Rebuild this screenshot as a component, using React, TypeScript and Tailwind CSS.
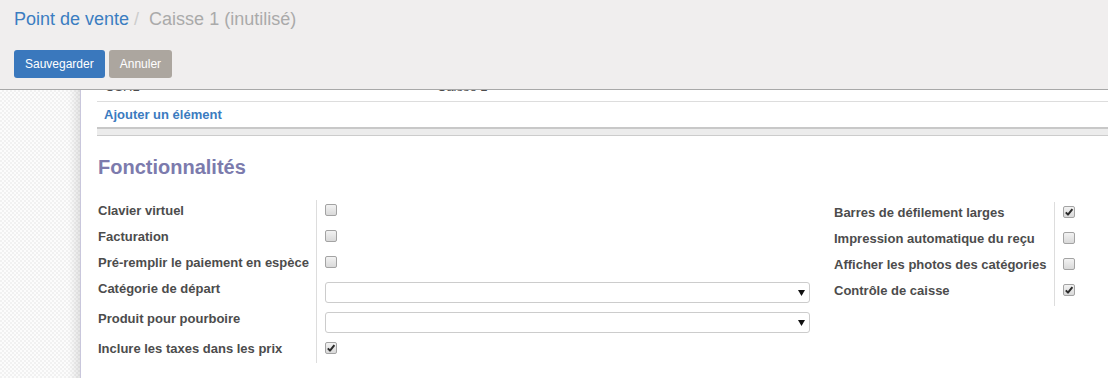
import React from "react";

type Row = { label: string; kind: "check" | "select"; checked?: boolean; h: string };

const leftRows: Row[] = [
  { label: "Clavier virtuel", kind: "check", h: "h-[26px]" },
  { label: "Facturation", kind: "check", h: "h-[26px]" },
  { label: "Pré-remplir le paiement en espèce", kind: "check", h: "h-[26px]" },
  { label: "Catégorie de départ", kind: "select", h: "h-[30px]" },
  { label: "Produit pour pourboire", kind: "select", h: "h-[30px]" },
  { label: "Inclure les taxes dans les prix", kind: "check", checked: true, h: "h-[25px]" },
];

const rightRows: Row[] = [
  { label: "Barres de défilement larges", kind: "check", checked: true, h: "h-[26px]" },
  { label: "Impression automatique du reçu", kind: "check", h: "h-[26px]" },
  { label: "Afficher les photos des catégories", kind: "check", h: "h-[26px]" },
  { label: "Contrôle de caisse", kind: "check", checked: true, h: "h-[26px]" },
];

const Checkbox: React.FC<{ checked?: boolean }> = ({ checked }) => (
  <div className="w-3 h-3 rounded-[2px] border border-[#a3a3a3] bg-gradient-to-b from-[#f2f2f2] to-[#d9d9d9] flex items-center justify-center">
    {checked && (
      <svg width="10" height="10" viewBox="0 0 10 10">
        <path d="M1.8 5.4 L4 7.6 L8.4 2.2" fill="none" stroke="#2b2b2b" strokeWidth="2" strokeLinejoin="round" />
      </svg>
    )}
  </div>
);

const Select: React.FC = () => (
  <div className="w-[485px] h-[21px] rounded-[3px] border border-[#cccccc] bg-white flex items-center justify-end pr-[4px]">
    <svg width="7" height="6" viewBox="0 0 7 6">
      <path d="M0 0 H7 L3.5 6 Z" fill="#111" />
    </svg>
  </div>
);

const Group: React.FC<{ rows: Row[]; labelW: string; className?: string }> = ({ rows, labelW, className }) => (
  <div className={className}>
    {rows.map((r) => (
      <div key={r.label} className={`flex ${r.h}`}>
        <div className={`${labelW} border-r border-[#dddddd] pt-[3px] text-[13px] leading-[15px] font-bold text-[#4c4c4c] whitespace-nowrap`}>
          {r.label}
        </div>
        <div className="pl-2 pt-1">{r.kind === "check" ? <Checkbox checked={r.checked} /> : <Select />}</div>
      </div>
    ))}
  </div>
);

export default function App() {
  return (
    <div className="w-[1108px] h-[378px] overflow-hidden bg-white font-['Liberation_Sans',Arial,sans-serif]">
      <header className="h-[90px] bg-[#f0eeee] border-b border-[#a8a8a8] pt-[7px] px-[14px]">
        <div className="text-[18px] leading-[25px] whitespace-nowrap">
          <span className="text-[#3b7dc1]">Point de vente</span>
          <span className="text-[#cccccc] pl-[5px] pr-[10px]">/</span>
          <span className="text-[#aaaaaa]">Caisse 1 (inutilisé)</span>
        </div>
        <div className="mt-[18px] flex gap-1">
          <button className="h-7 px-[11px] rounded-[3px] bg-[#3a78bd] text-white text-[12px]">Sauvegarder</button>
          <button className="h-7 px-[11px] rounded-[3px] bg-[#aca69f] text-white text-[12px]">Annuler</button>
        </div>
      </header>

      <div className="flex h-[288px]">
        <aside className="w-[81px] border-r border-[#c9c7dc] bg-[image:repeating-conic-gradient(#f1f1f1_0%_25%,#fcfcfc_0%_50%)] bg-size-[4px_4px] shadow-[inset_-12px_0_10px_-8px_rgba(0,0,0,0.12)]" />
        <main className="flex-1 pl-4 overflow-hidden">
          <div className="h-[12px] border-b border-[#dddddd] overflow-hidden flex text-[13px] text-[#4c4c4c]">
            <div className="-mt-[12px] leading-[18px] pl-2 w-[340px]">CSH1</div>
            <div className="-mt-[12px] leading-[18px]">Caisse 1</div>
          </div>
          <div className="h-[25px] flex items-center pl-[7px] text-[13px] font-bold text-[#3b7bbf]">Ajouter un élément</div>
          <div className="h-[9px] border-t-2 border-b border-t-[#c8c8c8] border-b-[#cccccc] bg-[#ececec]" />

          <h2 className="mt-[19px] pl-px text-[20px] leading-[24px] font-bold text-[#7c7bad]">Fonctionnalités</h2>

          <div className="mt-[21px] flex pl-px">
            <Group rows={leftRows} labelW="w-[219px]" className="w-[728px]" />
            <Group rows={rightRows} labelW="w-[229px] pl-2" className="mt-[2px]" />
          </div>
        </main>
      </div>
    </div>
  );
}
